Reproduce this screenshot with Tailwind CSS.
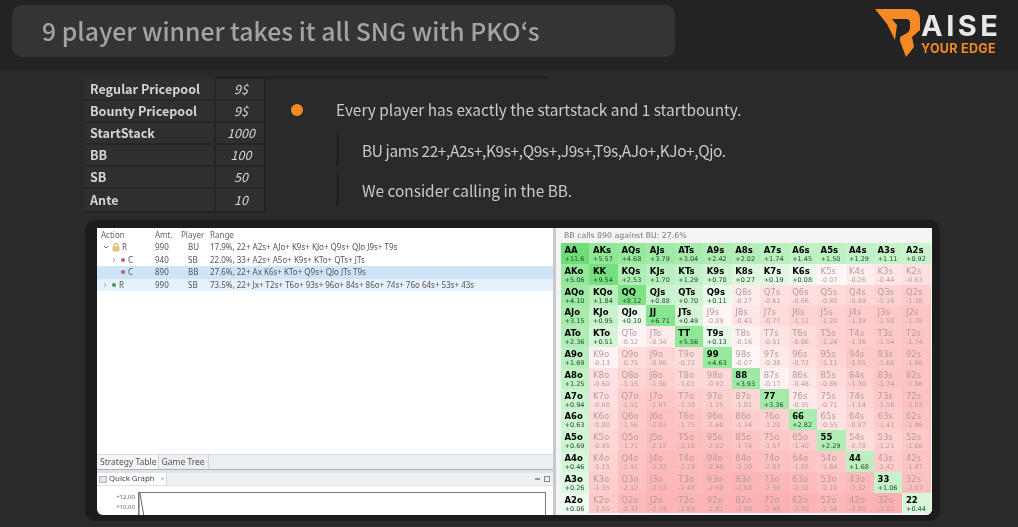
<!DOCTYPE html>
<html>
<head>
<meta charset="utf-8">
<script src="https://cdn.jsdelivr.net/npm/@tailwindcss/browser@4"></script>
</head>
<body class="bg-[#2a2a2a]">
<div class="w-[1018px] h-[527px] overflow-hidden bg-[#2a2a2a] flex flex-col font-['Noto_Sans_CJK_JP','Noto_Sans',sans-serif]">
  <header class="h-[70px] shrink-0 bg-[#232323] flex pl-[12px] pt-[5px]">
    <div class="w-[663px] h-[52px] rounded-[10px] bg-[#343434] flex items-center pl-[30px] text-[24.75px] font-medium text-[#a3a3a3] blur-[0.5px] whitespace-nowrap">9 player winner takes it all SNG with PKO‘s</div>
    <div class="ml-[200px] w-[143px] flex items-start blur-[0.3px]">
      <svg class="shrink-0" width="46" height="55" viewBox="875 5 46 55">
        <path fill="#f58a25" d="M875 9H911Q920 10 920 19V30L912 37L914 47L906 57L900 41V37L907 33Q910 31 910 28V23Q910 19 906 19H892L897 25L895 40L887 24Z"/>
      </svg>
      <div class="flex flex-col font-['Inter',sans-serif] font-bold">
        <div class="text-[29px] leading-[32px] tracking-[3.5px] text-[#e8e8e8] mt-[5px] h-[32px]">AISE</div>
        <div class="text-[12.5px] leading-[13px] tracking-[0.3px] text-[#f58a25] whitespace-nowrap">YOUR EDGE</div>
      </div>
    </div>
  </header>

  <section class="flex flex-col pt-[6px] h-[150px] shrink-0 pl-[84px]">
    <div class="ml-[132px] w-[332px] h-[3px] bg-[#212121]"></div>
    <div class="flex blur-[0.4px]">
      <div class="w-[182px] grid grid-cols-[132px_50px] grid-rows-[repeat(6,22px)] bg-[#2f2f2f] text-[12.6px] text-[#d4d4d4] border-b-2 border-r-2 border-[#222]">
        <div class="flex items-center pl-[6px] font-bold border-b-2 border-r-2 border-[#262626]">Regular Pricepool</div><div class="flex items-center justify-center italic border-b-2 border-[#262626]">9$</div>
        <div class="flex items-center pl-[6px] font-bold border-b-2 border-r-2 border-[#262626]">Bounty Pricepool</div><div class="flex items-center justify-center italic border-b-2 border-[#262626]">9$</div>
        <div class="flex items-center pl-[6px] font-bold border-b-2 border-r-2 border-[#262626]">StartStack</div><div class="flex items-center justify-center italic border-b-2 border-[#262626]">1000</div>
        <div class="flex items-center pl-[6px] font-bold border-b-2 border-r-2 border-[#262626]">BB</div><div class="flex items-center justify-center italic border-b-2 border-[#262626]">100</div>
        <div class="flex items-center pl-[6px] font-bold border-b-2 border-r-2 border-[#262626]">SB</div><div class="flex items-center justify-center italic border-b-2 border-[#262626]">50</div>
        <div class="flex items-center pl-[6px] font-bold border-r-2 border-[#262626]">Ante</div><div class="flex items-center justify-center italic">10</div>
      </div>
      <div class="ml-[25px] pt-[20px] flex flex-col text-[15.4px] text-[#c9c9c9]">
        <div class="flex items-center h-[22px]">
          <span class="w-[12px] h-[12px] rounded-full bg-[#f58a25] shrink-0"></span>
          <span class="ml-[33px] whitespace-nowrap">Every player has exactly the startstack and 1 startbounty.</span>
        </div>
        <div class="ml-[45px] mt-[13px] h-[33px] pl-[23px] border-l-[3px] border-[#222] flex items-center whitespace-nowrap tracking-[-0.37px]">BU jams 22+,A2s+,K9s+,Q9s+,J9s+,T9s,AJo+,KJo+,Qjo.</div>
        <div class="ml-[45px] mt-[7px] h-[33px] pl-[23px] border-l-[3px] border-[#222] flex items-center whitespace-nowrap">We consider calling in the BB.</div>
      </div>
    </div>
  </section>

  <section class="ml-[85px] w-[855px] h-[301px] shrink-0 bg-[#1c1c1c] rounded-[10px] pt-[8px] pl-[12px] pr-[8px] pb-[6px]">
    <div class="w-[835px] h-[287px] bg-white rounded-b-[6px] overflow-hidden flex blur-[0.45px]">
      <div class="w-[456px] shrink-0 flex flex-col font-['Noto_Sans',sans-serif] text-[8px] text-[#555]">
        <div class="grid grid-cols-[54px_26px_29px_1fr] pl-[4px] h-[13px] items-center text-[#666]"><span>Action</span><span>Amt.</span><span>Player</span><span>Range</span></div>
        <div class="grid grid-cols-[54px_26px_29px_1fr] pl-[4px] h-[12.5px] items-center">
          <span class="flex items-center">
            <svg width="6" height="6" viewBox="0 0 6 6" class="ml-[2px]"><path d="M1 2l2 2 2-2" fill="none" stroke="#666" stroke-width="1"/></svg>
            <svg width="8" height="9" viewBox="0 0 8 9" class="ml-[3px]"><path d="M2 4V2.5a2 2 0 0 1 4 0V4" fill="none" stroke="#b8a468" stroke-width="1"/><rect x="0.5" y="3.5" width="7" height="5" rx="1" fill="#e3c46a"/></svg>
            <span class="ml-[2px]">R</span>
          </span><span>990</span><span class="pl-[7px]">BU</span><span class="whitespace-nowrap">17.9%, 22+ A2s+ AJo+ K9s+ KJo+ Q9s+ QJo J9s+ T9s</span>
        </div>
        <div class="grid grid-cols-[54px_26px_29px_1fr] pl-[4px] h-[12.5px] items-center">
          <span class="flex items-center">
            <svg width="6" height="6" viewBox="0 0 6 6" class="ml-[10px]"><path d="M2 1l2 2-2 2" fill="none" stroke="#aaa" stroke-width="1"/></svg>
            <span class="w-[4px] h-[4px] rounded-full bg-[#b5617c] ml-[4px]"></span>
            <span class="ml-[3px]">C</span>
          </span><span>940</span><span class="pl-[7px]">SB</span><span class="whitespace-nowrap">22.0%, 33+ A2s+ A5o+ K9s+ KTo+ QTs+ JTs</span>
        </div>
        <div class="grid grid-cols-[54px_26px_29px_1fr] pl-[4px] h-[12.5px] items-center bg-[#cfe4f7]">
          <span class="flex items-center">
            <span class="w-[4px] h-[4px] rounded-full bg-[#b5617c] ml-[20px]"></span>
            <span class="ml-[3px]">C</span>
          </span><span>890</span><span class="pl-[7px]">BB</span><span class="whitespace-nowrap">27.6%, 22+ Ax K6s+ KTo+ Q9s+ QJo JTs T9s</span>
        </div>
        <div class="grid grid-cols-[54px_26px_29px_1fr] pl-[4px] h-[12.5px] items-center bg-[#e6f1fb]">
          <span class="flex items-center">
            <svg width="6" height="6" viewBox="0 0 6 6" class="ml-[1px]"><path d="M2 1l2 2-2 2" fill="none" stroke="#aaa" stroke-width="1"/></svg>
            <span class="w-[4px] h-[4px] rounded-full bg-[#3f9a5c] ml-[4px]"></span>
            <span class="ml-[3px]">R</span>
          </span><span>990</span><span class="pl-[7px]">SB</span><span class="whitespace-nowrap">73.5%, 22+ Jx+ T2s+ T6o+ 93s+ 96o+ 84s+ 86o+ 74s+ 76o 64s+ 53s+ 43s</span>
        </div>
        <div class="flex-1"></div>
        <div class="h-[16px] shrink-0 flex bg-[#eceff2] border-t border-[#d8dce0] border-b border-b-[#a9b2bc] text-[8.5px] text-[#555]">
          <span class="pl-[3px] pr-[1px] flex items-center bg-[#f5f6f7] border-r border-[#d0d4d8]">Strategy Table</span>
          <span class="px-[3px] flex items-center border-r border-[#d0d4d8]">Game Tree</span>
        </div>
        <div class="h-[3px] shrink-0 bg-[#dfe3e7]"></div>
        <div class="h-[13px] shrink-0 flex items-stretch justify-between bg-[#eef1f4] border-b border-[#dce0e4]">
          <span class="w-[70px] bg-white border-r border-[#d0d4d8] flex items-center text-[7.8px] text-[#444] whitespace-nowrap">
            <svg width="8" height="7" viewBox="0 0 8 7" class="ml-[2px] mr-[2px] shrink-0"><rect x="0.5" y="0.5" width="7" height="6" fill="#e4e4e4" stroke="#999" stroke-width="0.7"/></svg>
            <span>Quick Graph</span>
            <span class="ml-[5px] text-[6px] text-[#aaa]">✕</span>
          </span>
          <span class="flex items-center gap-[4px] pr-[3px]">
            <span class="w-[5px] h-[2px] border border-[#999]"></span>
            <span class="w-[6px] h-[6px] border border-[#888]"></span>
          </span>
        </div>
        <div class="h-[29px] shrink-0 flex pt-[6px]">
          <div class="w-[39px] pr-[1px] text-right text-[6px] leading-[10px] text-[#666]"><div>+12.00</div><div>+10.00</div></div>
          <div class="relative ml-[2px] w-[408px] h-[24px] border border-b-0 border-[#777]">
            <svg class="absolute left-0 top-0" width="6" height="24" viewBox="0 0 6 24"><path d="M0 24V0H1L5 24" fill="none" stroke="#666" stroke-width="1"/></svg>
          </div>
        </div>
      </div>
      <div class="w-[3px] shrink-0 bg-[#c6cad0]"></div>
      <div class="flex-1 min-w-0 flex flex-col bg-[#f4f4f4] pl-[5px] font-['DejaVu_Sans',sans-serif]">
        <div class="h-[15px] shrink-0 flex items-center pl-[3px] text-[7.8px] text-[#777]">BB calls 890 against BU: 27.6%</div>
        <div id="matrix" class="grid grid-cols-[repeat(13,28.46px)] grid-rows-[repeat(13,20.8px)]"></div>
      </div>
    </div>
  </section>
</div>
<script>
const data = `AA +11.6,AKs +5.57,AQs +4.68,AJs +3.79,ATs +3.04,A9s +2.42,A8s +2.02,A7s +1.74,A6s +1.45,A5s +1.50,A4s +1.29,A3s +1.11,A2s +0.92
AKo +5.06,KK +9.54,KQs +2.53,KJs +1.70,KTs +1.29,K9s +0.70,K8s +0.27,K7s +0.19,K6s +0.08,K5s -0.07,K4s -0.26,K3s -0.44,K2s -0.63
AQo +4.10,KQo +1.84,QQ +8.12,QJs +0.88,QTs +0.70,Q9s +0.11,Q8s -0.27,Q7s -0.61,Q6s -0.66,Q5s -0.80,Q4s -0.99,Q3s -1.16,Q2s -1.38
AJo +3.15,KJo +0.95,QJo +0.10,JJ +6.71,JTs +0.49,J9s -0.09,J8s -0.43,J7s -0.77,J6s -1.12,J5s -1.20,J4s -1.39,J3s -1.58,J2s -1.78
ATo +2.36,KTo +0.51,QTo -0.12,JTo -0.34,TT +5.56,T9s +0.13,T8s -0.16,T7s -0.51,T6s -0.86,T5s -1.24,T4s -1.36,T3s -1.54,T2s -1.74
A9o +1.69,K9o -0.13,Q9o -0.75,J9o -0.96,T9o -0.72,99 +4.63,98s -0.07,97s -0.38,96s -0.72,95s -1.11,94s -1.55,93s -1.66,92s -1.86
A8o +1.25,K8o -0.60,Q8o -1.15,J8o -1.30,T8o -1.01,98o -0.92,88 +3.93,87s -0.17,86s -0.48,85s -0.86,84s -1.30,83s -1.74,82s -1.86
A7o +0.94,K7o -0.68,Q7o -1.51,J7o -1.67,T7o -1.38,97o -1.25,87o -1.01,77 +3.36,76s -0.35,75s -0.71,74s -1.14,73s -1.58,72s -2.03
A6o +0.63,K6o -0.80,Q6o -1.56,J6o -2.03,T6o -1.75,96o -1.60,86o -1.34,76o -1.20,66 +2.82,65s -0.55,64s -0.97,63s -1.41,62s -1.86
A5o +0.69,K5o -0.95,Q5o -1.71,J5o -2.12,T5o -2.16,95o -2.02,85o -1.74,75o -1.57,65o -1.40,55 +2.29,54s -0.78,53s -1.21,52s -1.66
A4o +0.46,K4o -1.15,Q4o -1.91,J4o -2.32,T4o -2.28,94o -2.48,84o -2.20,74o -2.03,64o -1.85,54o -1.64,44 +1.68,43s -1.42,42s -1.87
A3o +0.26,K3o -1.35,Q3o -2.12,J3o -2.53,T3o -2.48,93o -2.60,83o -2.68,73o -2.50,63o -2.32,53o -2.10,43o -2.32,33 +1.06,32s -2.07
A2o +0.06,K2o -1.55,Q2o -2.33,J2o -2.74,T2o -2.69,92o -2.81,82o -2.80,72o -2.98,62o -2.80,52o -2.58,42o -2.80,32o -3.01,22 +0.44`;
const mix = (to, t) => `rgb(${to.map(c => Math.round(255 + (c - 255) * t)).join(',')})`;
const matrix = document.getElementById('matrix');
for (const cell of data.split(/[,\n]/)) {
  const [hand, ev] = cell.trim().split(' ');
  const v = parseFloat(ev);
  const up = v > 0;
  const bg = up ? mix([110, 222, 120], Math.min(1, Math.pow(v / 11, 0.4)))
                : mix([252, 176, 176], Math.min(1, Math.pow(-v / 3, 0.6)));
  const el = document.createElement('div');
  el.style.background = bg;
  el.className = up ? 'pl-[3.5px] pt-[2px] flex flex-col text-black' : 'pl-[3.5px] pt-[2px] flex flex-col text-[#b59c9c]';
  const a = document.createElement('span');
  a.className = up ? 'text-[8.5px] leading-[10px] font-bold' : 'text-[8.5px] leading-[10px]';
  a.textContent = hand;
  const b = document.createElement('span');
  b.className = up ? 'text-[6.5px] leading-[8px] text-[#1f4d28]' : 'text-[6.5px] leading-[8px]';
  b.textContent = ev;
  el.append(a, b);
  matrix.append(el);
}
</script>
</body>
</html>
